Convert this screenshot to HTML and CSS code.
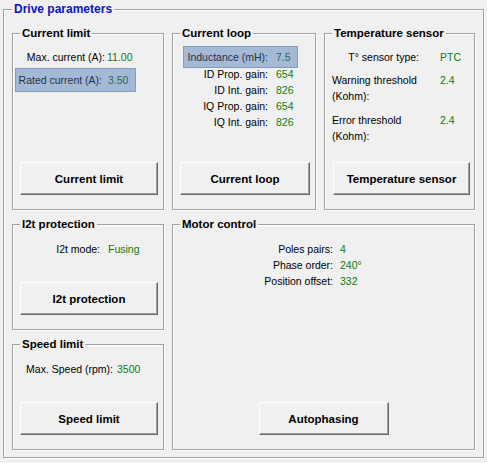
FILE: index.html
```html
<!DOCTYPE html>
<html lang="en">
<head>
    <meta charset="UTF-8">
    <meta name="viewport" content="width=device-width, initial-scale=1.0">
    <title>Drive parameters</title>
    <link rel="stylesheet" href="styles.css">
</head>
<body>
    <div class="drive">
        <div class="group-title drive-title">Drive parameters</div>

        <div class="panels">
            <section class="group current-limit">
                <div class="group-title">Current limit</div>
                <div class="field first">
                    <span class="label">Max. current (A):</span><span class="value">11.00</span>
                </div>
                <div class="field selected">
                    <span class="label">Rated current (A):</span><span class="value">3.50</span>
                </div>
                <button class="btn">Current limit</button>
            </section>

            <section class="group current-loop">
                <div class="group-title">Current loop</div>
                <div class="field selected">
                    <span class="label">Inductance (mH):</span><span class="value">7.5</span>
                </div>
                <div class="field after-selected">
                    <span class="label">ID Prop. gain:</span><span class="value">654</span>
                </div>
                <div class="field">
                    <span class="label">ID Int. gain:</span><span class="value">826</span>
                </div>
                <div class="field">
                    <span class="label">IQ Prop. gain:</span><span class="value">654</span>
                </div>
                <div class="field">
                    <span class="label">IQ Int. gain:</span><span class="value">826</span>
                </div>
                <button class="btn">Current loop</button>
            </section>

            <section class="group temp-sensor">
                <div class="group-title">Temperature sensor</div>
                <div class="field first">
                    <span class="label">T° sensor type:</span><span class="value">PTC</span>
                </div>
                <div class="field wrap warning">
                    <span class="label">Warning threshold<br>(Kohm):</span><span class="value">2.4</span>
                </div>
                <div class="field wrap error">
                    <span class="label">Error threshold<br>(Kohm):</span><span class="value">2.4</span>
                </div>
                <button class="btn">Temperature sensor</button>
            </section>

            <section class="group i2t">
                <div class="group-title">I2t protection</div>
                <div class="field first">
                    <span class="label">I2t mode:</span><span class="value">Fusing</span>
                </div>
                <button class="btn">I2t protection</button>
            </section>

            <section class="group motor">
                <div class="group-title">Motor control</div>
                <div class="field first">
                    <span class="label">Poles pairs:</span><span class="value">4</span>
                </div>
                <div class="field">
                    <span class="label">Phase order:</span><span class="value">240°</span>
                </div>
                <div class="field">
                    <span class="label">Position offset:</span><span class="value">332</span>
                </div>
                <button class="btn">Autophasing</button>
            </section>

            <section class="group speed">
                <div class="group-title">Speed limit</div>
                <div class="field first">
                    <span class="label">Max. Speed (rpm):</span><span class="value">3500</span>
                </div>
                <button class="btn">Speed limit</button>
            </section>
        </div>
    </div>
</body>
</html>
```

FILE: styles.css
```css
html{
    box-sizing: border-box;
    font-family: 'Liberation Sans', sans-serif;
    font-size: 10.5px;
}

*,
*:after,
*:before{
    box-sizing: inherit;
}

body{
    margin: 0;
    width: 487px;
    height: 463px;
    overflow: hidden;
    background-color: #f0f0f0;
    color: #000;
}

/* etched group box, windows classic style */
.drive,
.group{
    border: 1px solid #a0a0a0;
    box-shadow: 1px 1px 0 #fff, inset 1px 1px 0 #fff;
}

.drive{
    margin: 9px 0 0 3px;
    width: 481px;
    height: 449px;
    padding: 0 7px 0 8px;
}

.group-title{
    align-self: flex-start;
    width: fit-content;
    margin: -8px 0 0 7px;
    padding: 0 2px;
    background-color: #f0f0f0;
    font-size: 11.5px;
    font-weight: bold;
    line-height: 14px;
}

.drive-title{
    margin-left: 0;
    color: #0a14c8;
    font-size: 12px;
}

.panels{
    display: grid;
    grid-template-columns: 152px 144px 151px;
    grid-template-rows: 177px 106px 106px;
    column-gap: 8px;
    row-gap: 14px;
    margin-top: 17px;
}

.group{
    display: flex;
    flex-direction: column;
}

.current-limit{ grid-column: 1; grid-row: 1; }
.current-loop{ grid-column: 2; grid-row: 1; }
.temp-sensor{ grid-column: 3; grid-row: 1; }
.i2t{ grid-column: 1; grid-row: 2; }
.speed{ grid-column: 1; grid-row: 3; }
.motor{ grid-column: 2 / 4; grid-row: 2 / 4; }

.field{
    display: flex;
    line-height: 16px;
    white-space: nowrap;
}

.label{
    flex: none;
    text-align: right;
}

.value{
    color: #0c7c0c;
}

.field.selected{
    align-self: flex-start;
    border: 1px solid #7f9cc2;
    background-color: #a3b9d6;
}

.field.selected .label{
    color: #273246;
}

.field.selected .value{
    color: #2a6a58;
}

/* current limit */
.current-limit .field.first{ margin-top: 9px; }
.current-limit .field .label{ width: 92px; }
.current-limit .field .value{ margin-left: 2px; }
.current-limit .field.selected{
    margin: 3px 0 0 2px;
    width: 121px;
    padding: 3px 0;
}
.current-limit .field.selected .label{ width: 86px; }
.current-limit .field.selected .value{ margin-left: 6px; }

/* current loop */
.current-loop .field .label{ width: 95px; }
.current-loop .field .value{ margin-left: 8px; }
.current-loop .field.selected{
    margin: 6px 0 0 10px;
    width: 115px;
    padding: 2px 0;
}
.current-loop .field.selected .label{ width: 84px; }
.current-loop .field.after-selected{ margin-top: -2px; }

/* temperature sensor */
.temp-sensor .field .label{ width: 94px; }
.temp-sensor .field .value{ margin-left: 21px; }
.temp-sensor .field.first{ margin-top: 9px; }
.temp-sensor .field.wrap .label{
    text-align: left;
    padding-left: 7px;
}
.temp-sensor .field.warning{ margin-top: 7px; }
.temp-sensor .field.error{ margin-top: 8px; }

/* i2t, speed, motor */
.i2t .field.first,
.speed .field.first,
.motor .field.first{ margin-top: 10px; }

.i2t .field .label{ width: 87px; }
.i2t .field .value{ margin-left: 8px; }

.speed .field .label{ width: 100px; }
.speed .field .value{ margin-left: 4px; }

.motor .field .label{ width: 160px; }
.motor .field .value{ margin-left: 7px; }

.btn{
    display: flex;
    align-items: center;
    justify-content: center;
    margin: auto 0 14px 7px;
    width: 138px;
    height: 33px;
    padding: 0;
    border: 1px solid;
    border-color: #fff #696969 #696969 #fff;
    box-shadow: inset -1px -1px 0 #a0a0a0;
    background-color: #f0f0f0;
    color: #000;
    font-family: 'Liberation Sans', sans-serif;
    font-size: 11.5px;
    font-weight: bold;
}

.current-loop .btn{ width: 130px; }
.temp-sensor .btn{ width: 137px; margin-left: 8px; }
.motor .btn{ width: 130px; align-self: center; margin-left: 0; }
```
